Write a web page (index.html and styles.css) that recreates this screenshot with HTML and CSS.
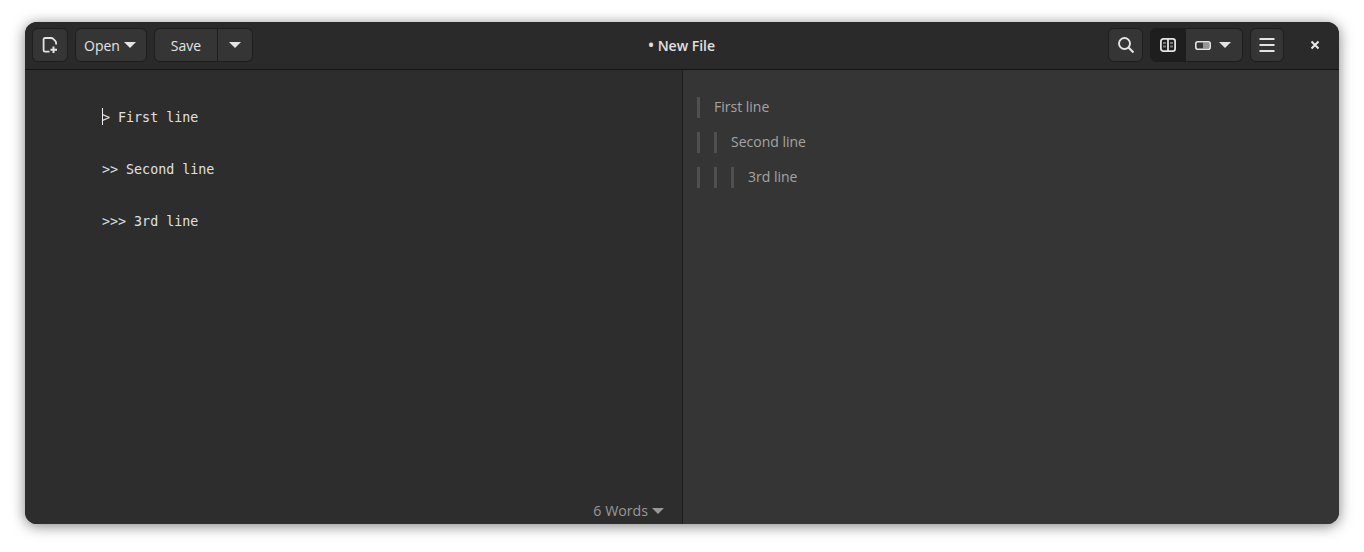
FILE: index.html
```html
<!DOCTYPE html>
<html lang="en">
<head>
<meta charset="utf-8">
<title>New File</title>
<link rel="stylesheet" href="styles.css">
</head>
<body>
<div class="window">
  <header class="header">
    <div class="group">
      <button class="btn square new">
        <svg class="icon" viewBox="0 0 16 16"><path d="M7.5 14.6H3a1.4 1.4 0 0 1-1.4-1.4V2.4A1.4 1.4 0 0 1 3 1h6.2a3 3 0 0 1 2 .9l2 2a3 3 0 0 1 .9 2V7.5" fill="none" stroke="currentColor" stroke-width="1.8"/><path d="M11.5 9.5v6.5M8.5 12.7h6.5" stroke="currentColor" stroke-width="2" fill="none"/></svg>
      </button>
      <button class="btn open">Open<span class="caret"></span></button>
      <div class="linked save">
        <button class="btn seg save-main">Save</button>
        <button class="btn seg save-more"><span class="caret"></span></button>
      </div>
    </div>
    <div class="title"><span class="dot">•</span> New File</div>
    <div class="group">
      <button class="btn square">
        <svg class="icon" viewBox="0 0 16 16"><circle cx="6.5" cy="6.5" r="5.5" fill="none" stroke="currentColor" stroke-width="1.9"/><path d="M10.5 10.5l5 5" stroke="currentColor" stroke-width="2.1" fill="none"/></svg>
      </button>
      <div class="linked mode">
        <button class="btn seg active">
          <svg class="icon" viewBox="0 0 16 16"><rect x=".9" y="1.9" width="14.2" height="12.2" rx="2.4" fill="none" stroke="currentColor" stroke-width="1.8"/><path d="M8 2v12" stroke="currentColor" stroke-width="1.8"/><path d="M3 5h3v2H3zM3 8.5h3v2H3zM10 5h3v2h-3zM10 8.5h3v2h-3z" fill="currentColor" opacity=".45"/></svg>
        </button>
        <button class="btn seg layout">
          <svg class="icon wide" viewBox="0 0 16 9"><rect x=".8" y=".8" width="14.4" height="7.4" rx="2" fill="none" stroke="currentColor" stroke-width="1.6"/><rect x="8" y="1.5" width="6.5" height="6" fill="currentColor" opacity=".55"/></svg>
          <span class="caret"></span>
        </button>
      </div>
      <button class="btn square menu">
        <svg class="icon" viewBox="0 0 16 16"><path d="M.5 2h15M.5 8h15M.5 14h15" stroke="currentColor" stroke-width="1.9" fill="none"/></svg>
      </button>
      <button class="close" aria-label="Close">
        <svg viewBox="0 0 10 10" class="close-icon"><path d="M1.5 1.5l7 7M8.5 1.5l-7 7" stroke="currentColor" stroke-width="2" fill="none"/></svg>
      </button>
    </div>
  </header>
  <main class="content">
    <section class="editor">
      <pre class="source"><span class="cursor"></span>&gt; First line

&gt;&gt; Second line

&gt;&gt;&gt; 3rd line</pre>
      <div class="words">6 Words<span class="caret dim"></span></div>
    </section>
    <section class="preview">
      <div class="quote-line"><span class="bar"></span><span>First line</span></div>
      <div class="quote-line"><span class="bar"></span><span class="bar"></span><span>Second line</span></div>
      <div class="quote-line"><span class="bar"></span><span class="bar"></span><span class="bar"></span><span>3rd line</span></div>
    </section>
  </main>
</div>
</body>
</html>
```
FILE: styles.css
```css
* { box-sizing: border-box; }
html, body { height: 100%; }
body {
  margin: 0;
  background: #fff;
  padding: 22px 25px 28px;
  overflow: hidden;
  font-family: "Open Sans", "Noto Sans", sans-serif;
}
.window {
  height: 502px;
  display: flex;
  flex-direction: column;
  border-radius: 12px;
  overflow: hidden;
  background: #2d2d2d;
  box-shadow: 0 2px 14px rgba(0, 0, 0, .5);
}
.header {
  height: 48px;
  flex: none;
  display: flex;
  align-items: center;
  justify-content: space-between;
  padding: 0 8px 1px 7px;
  background: #2a2a2a;
  border-bottom: 1px solid #141414;
  position: relative;
  color: #e4e4e4;
}
.group { display: flex; align-items: center; gap: 7px; }
.btn {
  height: 34px;
  padding: 0;
  display: flex;
  align-items: center;
  justify-content: center;
  background: #353535;
  border: 1px solid #1e1e1e;
  border-radius: 6px;
  color: #e4e4e4;
  font: 14px "Open Sans", "Noto Sans", sans-serif;
}
.square { width: 35px; }
.square.new { width: 36px; }
.square.menu { width: 34px; }
.open { width: 72px; gap: 4px; padding-right: 2px; }
.linked { display: flex; }
.seg { border-radius: 0; }
.seg:first-child { border-radius: 6px 0 0 6px; }
.seg:last-child { border-radius: 0 6px 6px 0; border-left: 0; }
.save-main { width: 64px; }
.save-more { width: 35px; }
.mode .seg:first-child { width: 36px; }
.mode .layout { width: 57px; gap: 8px; padding-right: 3px; }
.active { background: #1e1e1e; }
.icon { width: 16px; height: 16px; display: block; }
.icon.wide { height: 9px; }
.caret {
  width: 0;
  height: 0;
  border-left: 6px solid transparent;
  border-right: 6px solid transparent;
  border-top: 6px solid #e4e4e4;
}
.caret.dim { border-top-color: #989898; margin-left: 4px; }
.title {
  position: absolute;
  left: 623px;
  top: 14px;
  font-size: 14px;
  font-weight: 600;
  line-height: 20px;
  color: #e0e0e0;
}
.dot { font-size: 16px; line-height: 1; }
.close {
  width: 20px;
  height: 20px;
  margin: 0 6px 0 14px;
  padding: 0;
  background: none;
  border: 0;
  color: #e8e8e8;
  display: flex;
  align-items: center;
  justify-content: center;
}
.close-icon { width: 10px; height: 10px; }
.content { flex: 1; min-height: 0; display: flex; }
.editor {
  width: 658px;
  flex: none;
  position: relative;
  background: #2d2d2d;
  border-right: 1px solid #1c1c1c;
}
.source {
  margin: 0;
  padding: 35px 0 0 77px;
  font: 13.33px/26px "DejaVu Sans Mono", monospace;
  color: #e0e0e0;
  position: relative;
}
.cursor {
  position: absolute;
  left: 77px;
  top: 38px;
  width: 1px;
  height: 17px;
  background: #f0f0f0;
}
.words {
  position: absolute;
  right: 18px;
  bottom: 3px;
  display: flex;
  align-items: center;
  font-size: 14.2px;
  line-height: 20px;
  color: #989898;
}
.preview {
  flex: 1;
  background: #353535;
  padding: 27px 0 0 14px;
  display: flex;
  flex-direction: column;
  gap: 14px;
  color: #a4a4a4;
  font-size: 14px;
}
.quote-line {
  display: flex;
  gap: 14px;
  height: 21px;
  line-height: 20px;
}
.bar { width: 3px; background: #505050; }
```
